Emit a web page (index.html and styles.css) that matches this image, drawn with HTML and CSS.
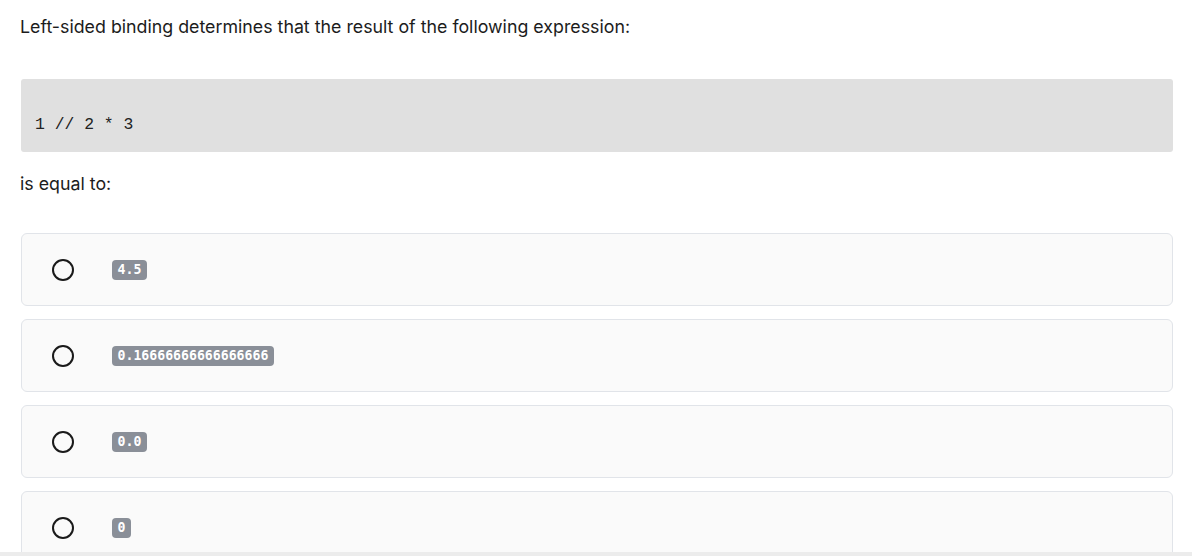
FILE: index.html
```html
<!DOCTYPE html>
<html>
<head>
<meta charset="utf-8">
<link rel="stylesheet" href="styles.css">
</head>
<body>
<main class="quiz">
  <p class="prompt">Left-sided binding determines that the result of the following expression:</p>
  <pre class="code">1 // 2 * 3</pre>
  <p class="prompt prompt-after">is equal to:</p>
  <ul class="options">
    <li class="option"><span class="radio"></span><code class="badge">4.5</code></li>
    <li class="option"><span class="radio"></span><code class="badge">0.16666666666666666</code></li>
    <li class="option"><span class="radio"></span><code class="badge">0.0</code></li>
    <li class="option"><span class="radio"></span><code class="badge">0</code></li>
  </ul>
</main>
<div class="bottom-bar"></div>
</body>
</html>
```

FILE: styles.css
```css
html, body {
  margin: 0;
  padding: 0;
  background: #ffffff;
  overflow: hidden;
  height: 100%;
}

.quiz {
  padding: 15px 19px 0 21px;
  font-family: "Inter", "Liberation Sans", sans-serif;
  color: #1c1c1c;
}

.prompt {
  margin: 0 0 0 -1px;
  font-size: 17.8px;
  line-height: 24px;
}

.code {
  margin: 40px 0 0 0;
  padding: 34px 14px 15px 14px;
  background: #e0e0e0;
  border-radius: 3px;
  font-family: "Liberation Mono", monospace;
  font-size: 16.4px;
  line-height: 24px;
  color: #222;
}

.prompt-after {
  margin-top: 20px;
}

.options {
  list-style: none;
  margin: 37px 0 0 0;
  padding: 0;
  display: flex;
  flex-direction: column;
  gap: 13px;
}

.option {
  box-sizing: border-box;
  height: 73px;
  display: flex;
  align-items: center;
  padding-left: 30px;
  background: #fafafa;
  border: 1px solid #e1e4e9;
  border-radius: 6px;
}

.radio {
  box-sizing: border-box;
  width: 22px;
  height: 22px;
  border: 2px solid #1a1a1a;
  border-radius: 50%;
  flex: none;
}

.badge {
  margin-left: 38px;
  height: 20px;
  line-height: 20px;
  padding: 0 5.5px;
  background: #8a8f98;
  color: #ffffff;
  border-radius: 4px;
  font-family: "DejaVu Sans Mono", monospace;
  font-weight: bold;
  font-size: 13.2px;
}

.bottom-bar {
  position: fixed;
  left: 0;
  right: 0;
  bottom: 0;
  height: 4px;
  background: #ececec;
}
```
